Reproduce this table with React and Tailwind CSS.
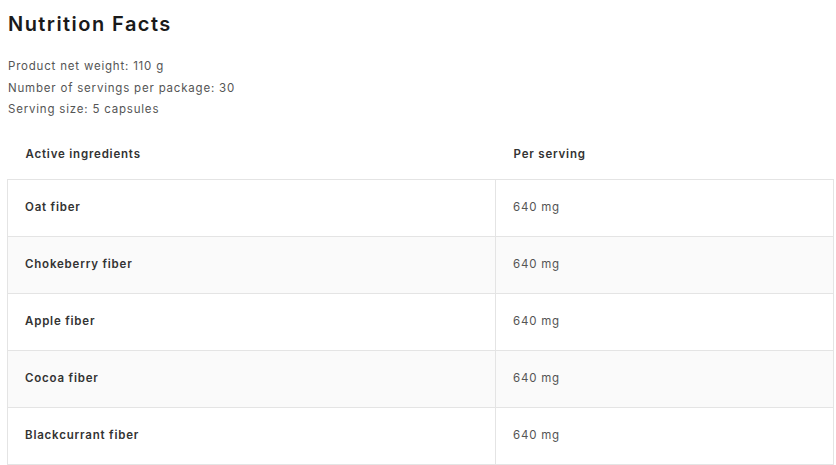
const rows = [
  { name: "Oat fiber", amount: "640 mg" },
  { name: "Chokeberry fiber", amount: "640 mg" },
  { name: "Apple fiber", amount: "640 mg" },
  { name: "Cocoa fiber", amount: "640 mg" },
  { name: "Blackcurrant fiber", amount: "640 mg" },
];

const App = () => {
  return (
    <div className="bg-white min-h-[465px] px-2 pt-[10px] font-['Inter',sans-serif] text-[#222]">
      <h2 className="text-[20px] leading-[28px] font-semibold tracking-[1.45px] text-[#1a1a1a]">
        Nutrition Facts
      </h2>
      <div className="mt-[18px] text-[11.5px] leading-[21.5px] tracking-[0.8px] text-[#555]">
        <p>Product net weight: 110 g</p>
        <p>Number of servings per package: 30</p>
        <p>Serving size: 5 capsules</p>
      </div>
      <table className="w-[827px] -ml-px mt-[9px] border-collapse text-[11.5px] tracking-[0.8px]">
        <thead>
          <tr className="h-[50px]">
            <th className="w-[488px] pl-[18px] text-left font-semibold text-[#333]">
              Active ingredients
            </th>
            <th className="pl-[18px] text-left font-semibold text-[#333]">
              Per serving
            </th>
          </tr>
        </thead>
        <tbody>
          {rows.map((row, i) => (
            <tr
              key={row.name}
              className={i % 2 === 1 ? "h-[57px] bg-[#fafafa]" : "h-[57px] bg-white"}
            >
              <td className="border border-[#e4e4e4] pl-[17px] font-semibold text-[#333]">
                {row.name}
              </td>
              <td className="border border-[#e4e4e4] pl-[17px] text-[#555]">
                {row.amount}
              </td>
            </tr>
          ))}
        </tbody>
      </table>
    </div>
  );
};

export default App;
